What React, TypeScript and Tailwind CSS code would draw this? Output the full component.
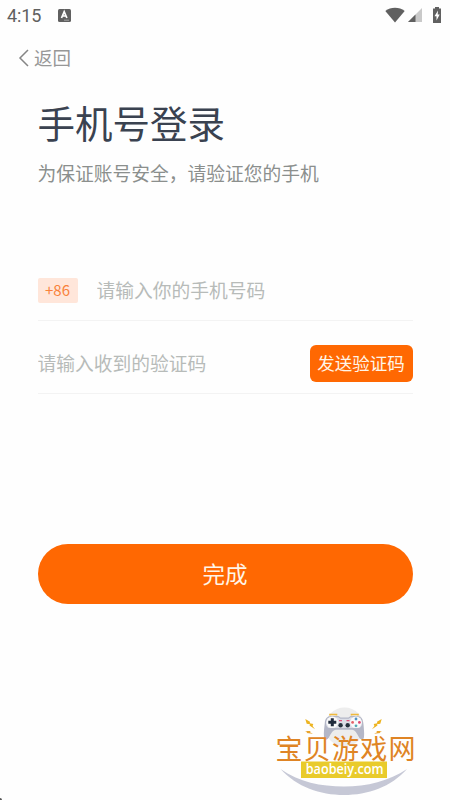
import React, { useState } from 'react';

const StatusBar: React.FC = () => (
  <div className="flex h-8 items-center justify-between pl-[7px] pr-[8px] text-[#606060]">
    <div className="flex items-center gap-[16px]">
      <span className="w-[35px] whitespace-nowrap font-[Roboto,sans-serif] text-[18px] leading-8 tracking-[-0.1px]">4:15</span>
      <svg className="mb-[2px] h-[13px] w-[13px]" viewBox="0 0 13 13">
        <rect width="13" height="13" rx="1.5" fill="#606060" />
        <path d="M3.5 9 6.2 2.6 8.9 9M4.5 7H8" fill="none" stroke="#fff" strokeWidth="1.7" />
        <path d="M6 11.2h5" stroke="#b5b5b5" strokeWidth="0.8" />
      </svg>
    </div>
    <svg className="mb-[2px] h-[18px] w-[57px]" viewBox="0 0 57 18">
      <path d="M.3 5C5.8.6 14.2.6 19.7 5L10 16.5z" fill="#606060" />
      <path d="M37 2v14H23z" fill="#c9c9c9" />
      <path d="M30.5 8.5V16H23z" fill="#606060" />
      <path d="M48 2.500h2V1h4v1.500h2V17h-8V2.500z" fill="#606060" />
      <path d="M53 4.500 49.500 10.300h2V14.500L54.700 8.500h-2z" fill="#fff" />
    </svg>
  </div>
);

const SiteMark: React.FC = () => (
  <svg
    className="pointer-events-none absolute left-[260px] top-[690px] h-[110px] w-[170px]"
    viewBox="0 0 170 110"
  >
    <circle cx="84.500" cy="37" r="19.500" fill="#ededed" />
    {/* gamepad */}
    <path d="M70 25.500v-1h6.500v1M91.500 25.500v-1H98v1" fill="none" stroke="#efb93c" strokeWidth="1.600" />
    <path
      d="M71 26h7.500l2 1.500h8l2-1.500H97c4 0 6 3 6.200 7 .5 5 1.300 9 .8 14-.4 3.300-3.200 3.300-4.700.8-2.300-4-4-8-7.300-8H76c-3.300 0-5 4-7.300 8-1.500 2.500-4.300 2.500-4.700-.8-.5-5 .3-9 .8-14 .2-4 2.200-7 6.200-7z"
      fill="#b4b7c7"
    />
    <path d="M71 27.200h7.300l2 1.500h8.400l2-1.500H97c3.200 0 5 2.800 5 6 0 2-.8 3.600-2.300 4.800H68.300C66.800 36.800 66 35.200 66 33.200c0-3.200 1.800-6 5-6z" fill="#dcdee7" />
    <circle cx="72.300" cy="32.300" r="5.800" fill="#fafafa" />
    <circle cx="96" cy="32.300" r="5.800" fill="#fafafa" />
    <path d="M72.300 28.300v8M68.300 32.300h8" stroke="#202b3c" strokeWidth="3" />
    <circle cx="96" cy="29" r="1.400" fill="#5193c5" />
    <circle cx="96" cy="35.800" r="1.400" fill="#53a9b5" />
    <circle cx="92.600" cy="32.400" r="1.400" fill="#e56269" />
    <circle cx="99.400" cy="32.400" r="1.400" fill="#df4770" />
    <path d="M79 30.600h3M86.500 30.600h3" stroke="#dd527b" strokeWidth="1.200" />
    <circle cx="80.600" cy="35.300" r="2.200" fill="#26313e" />
    <circle cx="87.700" cy="35.300" r="2.200" fill="#26313e" />
    {/* sparks */}
    <path d="M45.300 29 50 31.800l-.2 1.500 3.500.7-.7 2 2.400 3.300-5.500-3.800.5-1.200-3.300-.6z" fill="#edb421" />
    <path d="M45 41h5.500l-.5 1.200 3 1.600-6.500-.8.700-1z" fill="#e9a42d" />
    <path d="M121.700 29 117 31.800l.2 1.500-3.500.7.700 2-2.400 3.300 5.500-3.800-.5-1.200 3.300-.6z" fill="#edb421" />
    <path d="M122 41h-5.500l.5 1.200-3 1.600 6.500-.8-.7-1z" fill="#e9a42d" />
    <path d="M20.500 79C39 92 61 96.500 84 96.500s45-5.500 63-17.500C131 97 108 105 84 105S37 97 20.500 79z" fill="#c6c8d6" />
    <rect x="41" y="71.500" width="86" height="16.500" fill="#e9cb2b" />
    <text x="45.700" y="84" textLength="78" lengthAdjust="spacingAndGlyphs" className="fill-white font-['Open_Sans',sans-serif] text-[15px] font-semibold">baobeiy.com</text>
    <text x="15.500" y="68.500" textLength="140" className="fill-[#df8424] font-['Noto_Sans_CJK_SC',sans-serif] text-[27px]">宝贝游戏网</text>
  </svg>
);

const App: React.FC = () => {
  const [phone, setPhone] = useState('');
  const [code, setCode] = useState('');

  return (
    <div className="relative h-[800px] w-[450px] overflow-hidden bg-[#fefefe] font-['Noto_Sans_CJK_SC',sans-serif]">
      <StatusBar />
      <button type="button" className="mt-3 flex h-7 items-center gap-[5px] pl-[18px] text-[18.500px] text-[#979797]">
        <svg className="h-[18px] w-[11px]" viewBox="0 0 11 18" fill="none" stroke="#858585" strokeWidth="1.500">
          <path d="M10 1 2 9l8 8" />
        </svg>
        返回
      </button>

      <main className="px-[37.5px]">
        <h1 className="mt-[23px] text-[37.5px] leading-[54px] text-[#3a4250]">手机号登录</h1>
        <p className="mt-[10px] whitespace-nowrap text-[18.75px] leading-7 text-[#8b8f8d]">
          为保证账号安全，请验证您的手机
        </p>

        <div className="mt-[73px] flex h-[61px] items-center border-b border-[#f3f3f3]">
          <span className="flex h-[25px] w-[40px] items-center justify-center rounded-[2px] bg-[#ffe6da] text-[15px] text-[#f9823a]">
            +86
          </span>
          <input
            value={phone}
            onChange={(e) => setPhone(e.target.value)}
            placeholder="请输入你的手机号码"
            className="ml-[19px] min-w-0 flex-1 text-[18.75px] leading-7 outline-none placeholder:text-[#b7bbb9]"
          />
        </div>
        <div className="flex h-[73px] items-center border-b border-[#f3f3f3] pt-[12px]">
          <input
            value={code}
            onChange={(e) => setCode(e.target.value)}
            placeholder="请输入收到的验证码"
            className="min-w-0 flex-1 text-[18.75px] leading-7 outline-none placeholder:text-[#b7bbb9]"
          />
          <button type="button" className="h-[37px] w-[103px] rounded-[6px] bg-[#ff6802] text-[17.5px] text-[#fff5e8]">
            发送验证码
          </button>
        </div>

        <button type="button" className="mt-[150px] h-[60px] w-full rounded-full bg-[#ff6802] text-[22.500px] text-[#fff5e8]">
          完成
        </button>
      </main>

      <SiteMark />
      <span className="absolute bottom-0 left-0 h-[2px] w-[2px] rounded-tr-full bg-[#555]" />
    </div>
  );
};

export default App;
